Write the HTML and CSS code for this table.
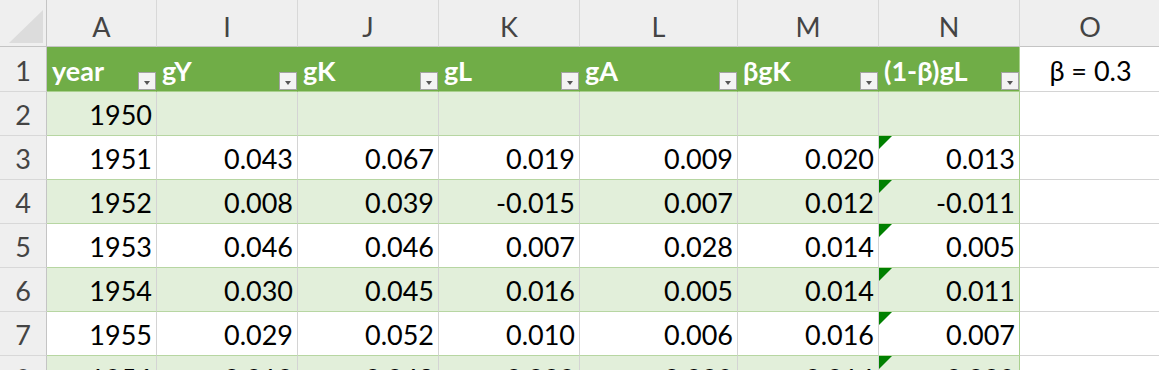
FILE: index.html
```html
<!DOCTYPE html>
<html>
<head>
<meta charset="utf-8">
<link rel="stylesheet" href="styles.css">
</head>
<body>
<div class="sheet">
  <div class="corner"><div class="tri"></div></div>
  <div class="ch">A</div><div class="ch">I</div><div class="ch">J</div><div class="ch">K</div><div class="ch">L</div><div class="ch">M</div><div class="ch">N</div><div class="ch last">O</div>

  <div class="rh r1">1</div>
  <div class="c hd left">year<span class="fb"></span></div>
  <div class="c hd left">gY<span class="fb"></span></div>
  <div class="c hd left">gK<span class="fb"></span></div>
  <div class="c hd left">gL<span class="fb"></span></div>
  <div class="c hd left">gA<span class="fb"></span></div>
  <div class="c hd left">βgK<span class="fb"></span></div>
  <div class="c hd left edge">(1-β)gL<span class="fb"></span></div>
  <div class="c out center">β = 0.3</div>

  <div class="rh">2</div>
  <div class="c band">1950</div><div class="c band"></div><div class="c band"></div><div class="c band"></div><div class="c band"></div><div class="c band"></div><div class="c band edge"></div><div class="c out"></div>

  <div class="rh">3</div>
  <div class="c">1951</div><div class="c">0.043</div><div class="c">0.067</div><div class="c">0.019</div><div class="c">0.009</div><div class="c">0.020</div><div class="c edge mk">0.013</div><div class="c out"></div>

  <div class="rh">4</div>
  <div class="c band">1952</div><div class="c band">0.008</div><div class="c band">0.039</div><div class="c band">-0.015</div><div class="c band">0.007</div><div class="c band">0.012</div><div class="c band edge mk">-0.011</div><div class="c out"></div>

  <div class="rh">5</div>
  <div class="c">1953</div><div class="c">0.046</div><div class="c">0.046</div><div class="c">0.007</div><div class="c">0.028</div><div class="c">0.014</div><div class="c edge mk">0.005</div><div class="c out"></div>

  <div class="rh">6</div>
  <div class="c band">1954</div><div class="c band">0.030</div><div class="c band">0.045</div><div class="c band">0.016</div><div class="c band">0.005</div><div class="c band">0.014</div><div class="c band edge mk">0.011</div><div class="c out"></div>

  <div class="rh">7</div>
  <div class="c">1955</div><div class="c">0.029</div><div class="c">0.052</div><div class="c">0.010</div><div class="c">0.006</div><div class="c">0.016</div><div class="c edge mk">0.007</div><div class="c out"></div>

  <div class="rh">8</div>
  <div class="c band">1956</div><div class="c band">0.010</div><div class="c band">0.043</div><div class="c band">0.009</div><div class="c band">0.008</div><div class="c band">0.014</div><div class="c band edge mk">0.008</div><div class="c out"></div>
</div>
</body>
</html>
```

FILE: styles.css
```css
html, body {
  margin: 0;
  padding: 0;
  background: #ffffff;
  overflow: hidden;
  height: 370px;
}
.sheet {
  display: grid;
  grid-template-columns: 47px 110px 141px 141px 141px 158px 141px 141px 140px;
  grid-template-rows: 47px 45px repeat(7, 44px);
  font-family: Lato, "Liberation Sans", sans-serif;
  font-size: 27px;
  line-height: 27px;
  color: #000;
}
.corner {
  background: #efefef;
  border-right: 1px solid #c4c4c4;
  border-bottom: 1px solid #c4c4c4;
  box-sizing: border-box;
  position: relative;
}
.tri {
  position: absolute;
  left: 9px;
  top: 10px;
  width: 34px;
  height: 33px;
  background: #dcdcdc;
  clip-path: polygon(100% 0, 100% 100%, 0 100%);
}
.ch {
  background: #efefef;
  color: #444;
  box-sizing: border-box;
  border-right: 1px solid #d8d8d8;
  border-bottom: 1px solid #c4c4c4;
  display: flex;
  align-items: flex-end;
  justify-content: center;
  padding-bottom: 6px;
}
.ch.last { border-right: none; }
.rh {
  background: #efefef;
  color: #444;
  box-sizing: border-box;
  border-right: 1px solid #c4c4c4;
  border-bottom: 1px solid #d8d8d8;
  display: flex;
  align-items: flex-end;
  justify-content: center;
  padding-bottom: 7px;
}
.c {
  position: relative;
  box-sizing: border-box;
  border-right: 1px solid #d4d4d4;
  border-bottom: 1px solid #b7d6a2;
  display: flex;
  align-items: flex-end;
  justify-content: flex-end;
  padding: 0 4px 7px 5px;
  white-space: nowrap;
}
.c.band { background: #e2efda; }
.c.edge { border-right: 1px solid #a9d08e; }
.c.out { border-bottom: 1px solid #d4d4d4; border-right: none; }
.c.center { justify-content: center; }
.c.hd {
  background: #70ad47;
  color: #ffffff;
  font-weight: 700;
  border-right-color: #70ad47;
  border-bottom-color: #a9d08e;
}
.c.hd.edge { border-right-color: #a9d08e; }
.c.left { justify-content: flex-start; }
.fb {
  position: absolute;
  right: 0;
  bottom: 1px;
  width: 18px;
  height: 18px;
  box-sizing: border-box;
  background: #f3f3f3;
  border: 1px solid #a3a3a3;
}
.fb::after {
  content: "";
  position: absolute;
  left: 5px;
  top: 8px;
  width: 0;
  height: 0;
  border-left: 3.5px solid transparent;
  border-right: 3.5px solid transparent;
  border-top: 4px solid #555;
}
.mk::before {
  content: "";
  position: absolute;
  left: 0;
  top: 0;
  width: 13px;
  height: 13px;
  background: #008000;
  clip-path: polygon(0 0, 100% 0, 0 100%);
}
```
